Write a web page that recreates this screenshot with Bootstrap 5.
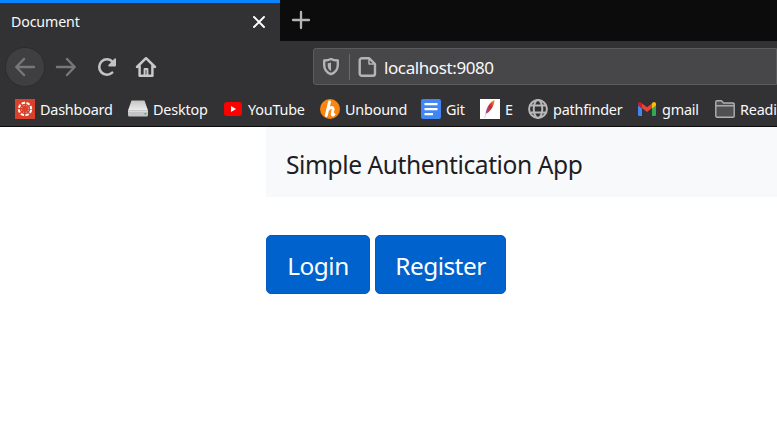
<!DOCTYPE html>
<html lang="en">
<head>
<meta charset="utf-8">
<title>Document</title>
<link href="https://cdn.jsdelivr.net/npm/bootstrap@5.3.0/dist/css/bootstrap.min.css" rel="stylesheet">
<style>
body{font-family:"Noto Sans","Open Sans",sans-serif;background:#fff;overflow:hidden;height:432px}
svg{display:block;flex:none}
.chrome{background:#323234;color:#f9f9fa;height:127px;border-bottom:1px solid #0c0c0d}
.tabstrip{background:#0c0c0d;height:41px}
.tab-item{width:280px;background:#323234;border-top:3px solid #0a84ff;padding:0 13px 0 11px}
.tab-label{font-size:14.2px;letter-spacing:-.13px;line-height:20px}
.new-tab{margin-left:11px;margin-top:-1px}
.toolbar{height:51px;padding-left:5px}
.back-btn{width:40px;height:40px;flex:none;background:#3f3f41;border:1px solid #2c2c2e}
.tools{width:308px;flex:none}
.fwd-icon{margin-left:10px}
.reload-icon{margin-left:20px}
.home-icon{margin-left:18px}
.address{height:37px;background:#474749;border:1px solid #5c5c5e;border-radius:3px 0 0 3px;padding-left:7px}
.address-rule{width:1px;height:26px;background:#69696b;margin:0 7px 0 8px}
.address-text{font-size:17px;letter-spacing:-.4px;margin:2px 0 0 7px}
.bookmarks{display:grid;grid-template-columns:98px 80px 82px 86px 44px 33px 94px 63px 62px;column-gap:15px;padding-left:15px;height:34px;font-size:14.4px;letter-spacing:-.2px}
.bookmark{display:flex;align-items:center;gap:5px;white-space:nowrap}
.bookmark span{padding-top:2px}
.page{margin-left:266px}
.page-head{height:70px;padding:6px 0 0 20px;font-size:24.6px;letter-spacing:-.43px;color:#1c2024}
.page-actions{margin-top:38px;gap:5px}
.btn-act{--bs-btn-bg:#0062cc;--bs-btn-border-color:#005cbf;--bs-btn-color:#fff;height:59px;padding:4px 0 0;font-size:24.4px;letter-spacing:-.5px;border-radius:5px}
.w-login{width:104px}.w-register{width:131px}
</style>
</head>
<body>
<header class="chrome">
  <div class="tabstrip d-flex align-items-stretch">
    <div class="tab-item d-flex align-items-center justify-content-between">
      <span class="tab-label">Document</span>
      <svg width="16" height="16" viewBox="0 0 16 16" stroke="#fff" stroke-width="1.9" stroke-linecap="round"><path d="M3 3l10 10M13 3L3 13"/></svg>
    </div>
    <div class="new-tab d-flex align-items-center"><svg width="20" height="20" viewBox="0 0 20 20" stroke="#b5b5b7" stroke-width="2.3" stroke-linecap="round"><path d="M10 2v16M2 10h16"/></svg></div>
  </div>
  <div class="toolbar d-flex align-items-center">
    <div class="tools d-flex align-items-center">
      <div class="back-btn rounded-circle d-flex align-items-center justify-content-center">
        <svg width="20" height="20" viewBox="0 0 20 20" fill="none" stroke="#777779" stroke-width="2.500" stroke-linecap="round" stroke-linejoin="round"><path d="M19 10H1.500M9 2L1.300 10l7.700 8"/></svg>
      </div>
      <svg class="fwd-icon" width="22" height="20" viewBox="0 0 22 20" fill="none" stroke="#777779" stroke-width="2.500" stroke-linecap="round" stroke-linejoin="round"><path d="M2 10h17.500M12 2l7.700 8-7.700 8"/></svg>
      <svg class="reload-icon" width="20" height="20" viewBox="0 0 20 20" fill="none" stroke="#c2c2c4" stroke-width="2.600" stroke-linecap="round" stroke-linejoin="round"><path d="M15.200 15.600A7.700 7.700 0 1 1 15.600 4.800"/><path d="M18.200 2v6.600h-6.200z" fill="#c2c2c4" stroke-width="1.600"/></svg>
      <svg class="home-icon" width="22" height="22" viewBox="0 0 22 22" fill="none" stroke="#c9c9cb" stroke-width="2.500" stroke-linecap="round" stroke-linejoin="round"><path d="M2 11l9-8.800L20 11M4.600 10v9.800h12.800V10"/><path d="M9.600 19v-6h2.800v6" stroke-width="2"/></svg>
    </div>
    <div class="address flex-grow-1 d-flex align-items-center">
      <svg width="20" height="20" viewBox="0 0 20 20" fill="none" stroke="#b4b4b6" stroke-width="2.400" stroke-linejoin="round"><path d="M10 2c2 1 4 1.400 6.800 1.500V8c0 5-2.300 7.500-6.800 9.200C5.500 15.500 3.200 13 3.200 8V3.500C6 3.400 8 3 10 2z"/><path d="M10 5.500v8.500C7.800 12.800 6.700 11 6.700 8.500V6.200C7.900 6.100 9 5.900 10 5.500z" fill="#b4b4b6" stroke="none"/></svg>
      <span class="address-rule"></span>
      <svg width="20" height="20" viewBox="0 0 20 20" fill="none" stroke="#b4b4b6" stroke-width="2.400" stroke-linejoin="round"><path d="M5 1.200h7L18 7v9.500a2.300 2.300 0 0 1-2.300 2.300H5a2.300 2.300 0 0 1-2.300-2.300v-13A2.300 2.300 0 0 1 5 1.200z"/><path d="M12 1.500V7h5.500" stroke-width="1.500"/></svg>
      <span class="address-text">localhost:9080</span>
    </div>
  </div>
  <nav class="bookmarks">
    <div class="bookmark"><svg width="20" height="20" viewBox="0 0 20 20"><path fill="#d9412a" d="M0 0h20v20H0z"/><circle cx="10" cy="10" r="6.200" fill="none" stroke="#fff" stroke-width="2" stroke-dasharray="3.400 1.470" transform="rotate(7 10 10)"/><circle cx="10" cy="10" r="3.600" fill="none" stroke="#fff" stroke-opacity=".7" stroke-width=".9" stroke-dasharray=".9 1.927" transform="rotate(15 10 10)"/></svg><span>Dashboard</span></div>
    <div class="bookmark"><svg width="20" height="20" viewBox="0 0 20 20"><defs><linearGradient id="drive" x2="0" y2="1"><stop stop-color="#c4c4c4"/><stop offset="1" stop-color="#ededed"/></linearGradient></defs><path d="M3.500 1.500h13L20 11.500H0z" fill="url(#drive)"/><path d="M0 11.500h20v4.500a1.500 1.500 0 0 1-1.500 1.500h-17A1.500 1.500 0 0 1 0 16z" fill="#c4c4c4"/><path d="M0 11.500h20v1.200H0z" fill="#e6e6e6"/><path d="M16.500 14h1.800v1.500h-1.800z" fill="#55ad42"/></svg><span>Desktop</span></div>
    <div class="bookmark"><svg width="20" height="20" viewBox="0 0 20 20"><rect x="1" y="3" width="18" height="14" rx="3" fill="#f00"/><path d="M8 7l5 3-5 3z" fill="#fff"/></svg><span>YouTube</span></div>
    <div class="bookmark"><svg width="20" height="20" viewBox="0 0 20 20"><circle cx="10" cy="10" r="10" fill="#f98512"/><path d="M9.500 3L6.300 16.500M7.400 11.500c1.600-3 6-4.300 5.700-1.300-.2 1.600-1.200 4.200-.8 5.400.3.700 1 .4 1.700-.2" fill="none" stroke="#fff" stroke-width="2.900" stroke-linecap="round"/></svg><span>Unbound</span></div>
    <div class="bookmark"><svg width="20" height="20" viewBox="0 0 20 20"><rect width="20" height="20" rx="2" fill="#4285f4"/><path d="M3.500 4h13v2.200h-13zM3.500 9h13v2.200h-13zM3.500 14h8.500v2.200H3.500z" fill="#fff"/></svg><span>Git</span></div>
    <div class="bookmark"><svg width="20" height="20" viewBox="0 0 20 20"><defs><linearGradient id="quill" x1="1" y1="0" x2="0" y2="1"><stop stop-color="#f5a11d"/><stop offset=".45" stop-color="#cd2532"/><stop offset="1" stop-color="#9a5aa8"/></linearGradient></defs><path fill="#fff" d="M0 0h20v20H0z"/><path d="M14.500 1C10.500 2.500 6 9 5.500 15c4.500-1.500 9-8.500 9-14z" fill="url(#quill)"/><path d="M6.500 14l-2 5" stroke="#d9d0df"/></svg><span>E</span></div>
    <div class="bookmark"><svg width="20" height="20" viewBox="0 0 20 20" fill="none" stroke="#b8b8ba" stroke-width="2"><circle cx="10" cy="10" r="8.900"/><ellipse cx="10" cy="10" rx="4.300" ry="8.900"/><path d="M2.500 6.500h15M2.500 13.500h15"/></svg><span>pathfinder</span></div>
    <div class="bookmark"><svg width="20" height="20" viewBox="0 0 20 20"><path fill="#4285f4" d="M1 6l4 3v8H2.300A1.300 1.300 0 0 1 1 15.700z"/><path fill="#34a853" d="M15 9l4-3v9.700a1.300 1.300 0 0 1-1.300 1.300H15z"/><path fill="#ea4335" d="M5 4.500l5 3.800 5-3.800V9l-5 4L5 9z"/><path fill="#c5221f" d="M1 6.500V5c0-2 2-2.600 3.300-1.500L5 4.200v5.300z"/><path fill="#fbbc04" d="M19 6.500V5c0-2-2-2.600-3.300-1.500l-.7.700v5.300z"/></svg><span>gmail</span></div>
    <div class="bookmark"><svg width="20" height="20" viewBox="0 0 20 20" fill="#505052" stroke="#b0b0b2" stroke-width="1.400" stroke-linejoin="round"><path d="M.8 17V3a1.200 1.200 0 0 1 1.200-1.200h4.500L8.500 4H18a1.200 1.200 0 0 1 1.200 1.200V17a1.200 1.200 0 0 1-1.200 1.200H2A1.200 1.200 0 0 1 .8 17z"/><path d="M1 6.800h18"/></svg><span>Readi</span></div>
  </nav>
</header>
<main class="page">
  <div class="page-head bg-light d-flex align-items-center">Simple Authentication App</div>
  <div class="page-actions d-flex">
    <button type="button" class="btn btn-act w-login">Login</button>
    <button type="button" class="btn btn-act w-register">Register</button>
  </div>
</main>
<script src="https://cdn.jsdelivr.net/npm/bootstrap@5.3.0/dist/js/bootstrap.bundle.min.js"></script>
</body>
</html>
